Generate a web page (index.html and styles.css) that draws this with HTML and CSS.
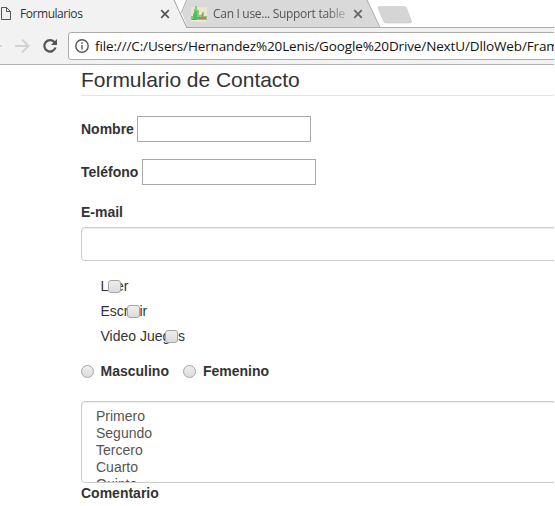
FILE: index.html
```html
<!DOCTYPE html>
<html lang="es">
<head>
<meta charset="utf-8">
<title>Formularios</title>
<link rel="stylesheet" href="styles.css">
</head>
<body>
<div class="window">
  <header class="browser">
    <div class="tabs">
      <svg class="tab-shapes" width="554" height="28" viewBox="0 0 554 28">
        <path d="M0 27.5H554" stroke="#ababab"/>
        <path d="M177 0H367L380 27.5H187.500Z" fill="#d9d9d9"/>
        <path d="M367 0L380 27.5H187" fill="none" stroke="#ababab"/>
        <path d="M0 0H174L187 28H0Z" fill="#f2f2f2"/>
        <path d="M174 0L187 28" fill="none" stroke="#9c9c9c"/>
        <path d="M180.500 14L186.500 0" fill="none" stroke="#ababab"/>
        <path d="M175 0L180.500 13L186 0Z" fill="#fff"/>
        <path d="M379 6.500H404.500Q406 6.500 406.500 8L411.500 21Q412 23 410 23H386Q384 23 383.500 21L378 8Q377.500 6.500 379 6.500Z" fill="#d5d5d5" stroke="#c8c8c8" stroke-width=".6"/>
      </svg>
      <div class="tab tab-active">
        <svg class="page-icon" width="12" height="16" viewBox="0 0 12 16" fill="none" stroke="#555"><path d="M1.500 1.500H6.500L10.500 5.500V13.500H1.500ZM6.500 1.500V5.500H10.500"/></svg>
        <span class="tab-title">Formularios</span>
        <svg class="close" width="10" height="10" viewBox="0 0 10 10" stroke="#555" stroke-width="1.700"><path d="M1.200 1.200L8.800 8.800M8.800 1.200L1.200 8.800"/></svg>
      </div>
      <div class="tab tab-idle">
        <svg width="16" height="16" viewBox="0 0 16 16"><path fill="#eee5d0" d="M0 1H16V16H0Z"/><path fill="#7fce83" d="M0 10H2V7H3V3H4V0H6V4H8V9H10V8H11V6H13V10H16V14H0Z"/><path fill="#55bb65" d="M3 5H6V11H9V13H2V9H3Z"/><path fill="#bd7b5b" d="M1 13H6V14H1ZM8 11H15V13H8ZM11 8H12V11H11Z"/></svg>
        <span class="tab-title">Can I use... Support table</span>
        <svg class="close" width="10" height="10" viewBox="0 0 10 10" stroke="#666" stroke-width="1.700"><path d="M1.200 1.200L8.800 8.800M8.800 1.200L1.200 8.800"/></svg>
      </div>
    </div>
    <div class="toolbar">
      <svg class="nav" width="68" height="36" viewBox="0 0 68 36" fill="none">
        <path d="M0 18H1.500" stroke="#d2d2d2" stroke-width="2"/>
        <path d="M15 18H28M22 11.500L28.500 18L22 24.500" stroke="#d2d2d2" stroke-width="2"/>
        <path d="M54.700 14.500A5.700 5.700 0 1 0 55.500 19.500" stroke="#555" stroke-width="2.200"/>
        <path d="M57 11V17H51Z" fill="#555"/>
      </svg>
      <div class="omnibox">
        <svg width="14" height="14" viewBox="0 0 14 14" fill="none" stroke="#555" stroke-width="1.400"><circle cx="7" cy="7" r="6.200"/><path d="M7 6V10.500M7 3.300V4.900"/></svg>
        <span class="url">file:///C:/Users/Hernandez%20Lenis/Google%20Drive/NextU/DlloWeb/Fram</span>
      </div>
    </div>
  </header>
  <form class="form">
    <h1>Formulario de Contacto</h1>
    <div class="field"><label for="nombre">Nombre</label><input id="nombre" class="plain" type="text"></div>
    <div class="field"><label for="telefono">Teléfono</label><input id="telefono" class="plain" type="text"></div>
    <div class="email"><label for="email">E-mail</label><input id="email" class="control" type="text"></div>
    <div class="checks">
      <label>Leer<input class="box" type="checkbox"></label>
      <label>Escribir<input class="box" type="checkbox"></label>
      <label>Video Juegos<input class="box" type="checkbox"></label>
    </div>
    <div class="radios">
      <label><input class="dot" type="radio" name="sexo">Masculino</label>
      <label><input class="dot" type="radio" name="sexo">Femenino</label>
    </div>
    <div class="control list">
      <div>Primero</div><div>Segundo</div><div>Tercero</div><div>Cuarto</div><div>Quinto</div>
    </div>
    <label class="comment">Comentario</label>
  </form>
</div>
</body>
</html>
```
FILE: styles.css
```css
* { box-sizing: border-box; }
body { margin: 0; background: #fff; overflow: hidden; }
.window { width: 554px; height: 506px; overflow: hidden; font: 14px/20px "Liberation Sans", Arial, sans-serif; color: #333; }
.browser { height: 65px; background: #f2f2f2; border-bottom: 1px solid #b0b0b0; font-family: "Open Sans", sans-serif; }
.tabs { position: relative; display: flex; height: 28px; background: #fff; }
.tab-shapes { position: absolute; left: 0; top: 0; }
.tab { position: relative; display: flex; align-items: center; height: 28px; font-size: 12px; color: #333; }
.tab-active { width: 191px; padding-right: 21px; }
.tab-active .tab-title { margin-left: 8px; letter-spacing: -.45px; }
.tab-idle { width: 172px; }
.tab-idle .tab-title { width: 132px; margin-left: 6px; overflow: hidden; white-space: nowrap; letter-spacing: -.3px; color: #555; -webkit-mask-image: linear-gradient(90deg, #000 86%, rgba(0,0,0,.3)); mask-image: linear-gradient(90deg, #000 86%, rgba(0,0,0,.3)); }
.close { margin-left: auto; flex: none; }
.tab-idle svg { flex: none; }
.toolbar { display: flex; height: 36px; }
.nav { flex: none; }
.omnibox { display: flex; align-items: center; width: 520px; flex: none; height: 28px; margin-top: 4px; padding-left: 6px; background: #fff; border: 1px solid #ababab; border-radius: 3px 0 0 3px; }
.omnibox svg { flex: none; }
.url { margin-left: 6px; font-size: 13.5px; letter-spacing: -.13px; color: #111; white-space: nowrap; }
.form { display: flex; flex-direction: column; width: 500px; margin-left: 81px; }
h1 { height: 31px; margin: 0 0 20px; font-size: 21px; line-height: 30px; font-weight: 400; letter-spacing: -.03px; border-bottom: 1px solid #e5e5e5; }
label { font-weight: 700; }
.field { display: flex; align-items: center; gap: 3.4px; height: 26px; margin-bottom: 17px; }
.plain { width: 174px; height: 26px; border: 1px solid #a9a9a9; background: #fff; }
.email { display: flex; flex-direction: column; gap: 5px; }
.control { width: 100%; height: 34px; border: 1px solid #ccc; border-radius: 4px; background: #fff; box-shadow: inset 0 1px 1px rgba(0,0,0,.075); }
.checks { display: flex; flex-direction: column; align-items: flex-start; gap: 5px; margin: 15px 0 0 19.5px; }
.checks label { position: relative; font-weight: 400; }
.box, .dot { appearance: none; width: 13px; height: 13px; margin: 0; border: 1px solid #a5a5a5; background: linear-gradient(#eee, #dcdcdc); }
.box { position: absolute; right: 7.4px; top: 4px; border-radius: 3px; }
.dot { border-radius: 50%; flex: none; }
.radios { display: flex; gap: 14px; margin: 15px 0 0 -.5px; }
.radios label { display: flex; align-items: center; gap: 7px; }
.list { height: 82px; margin-top: 20px; padding: 6px 14px; overflow: hidden; line-height: 17px; color: #555; }
.comment { display: block; }
```
